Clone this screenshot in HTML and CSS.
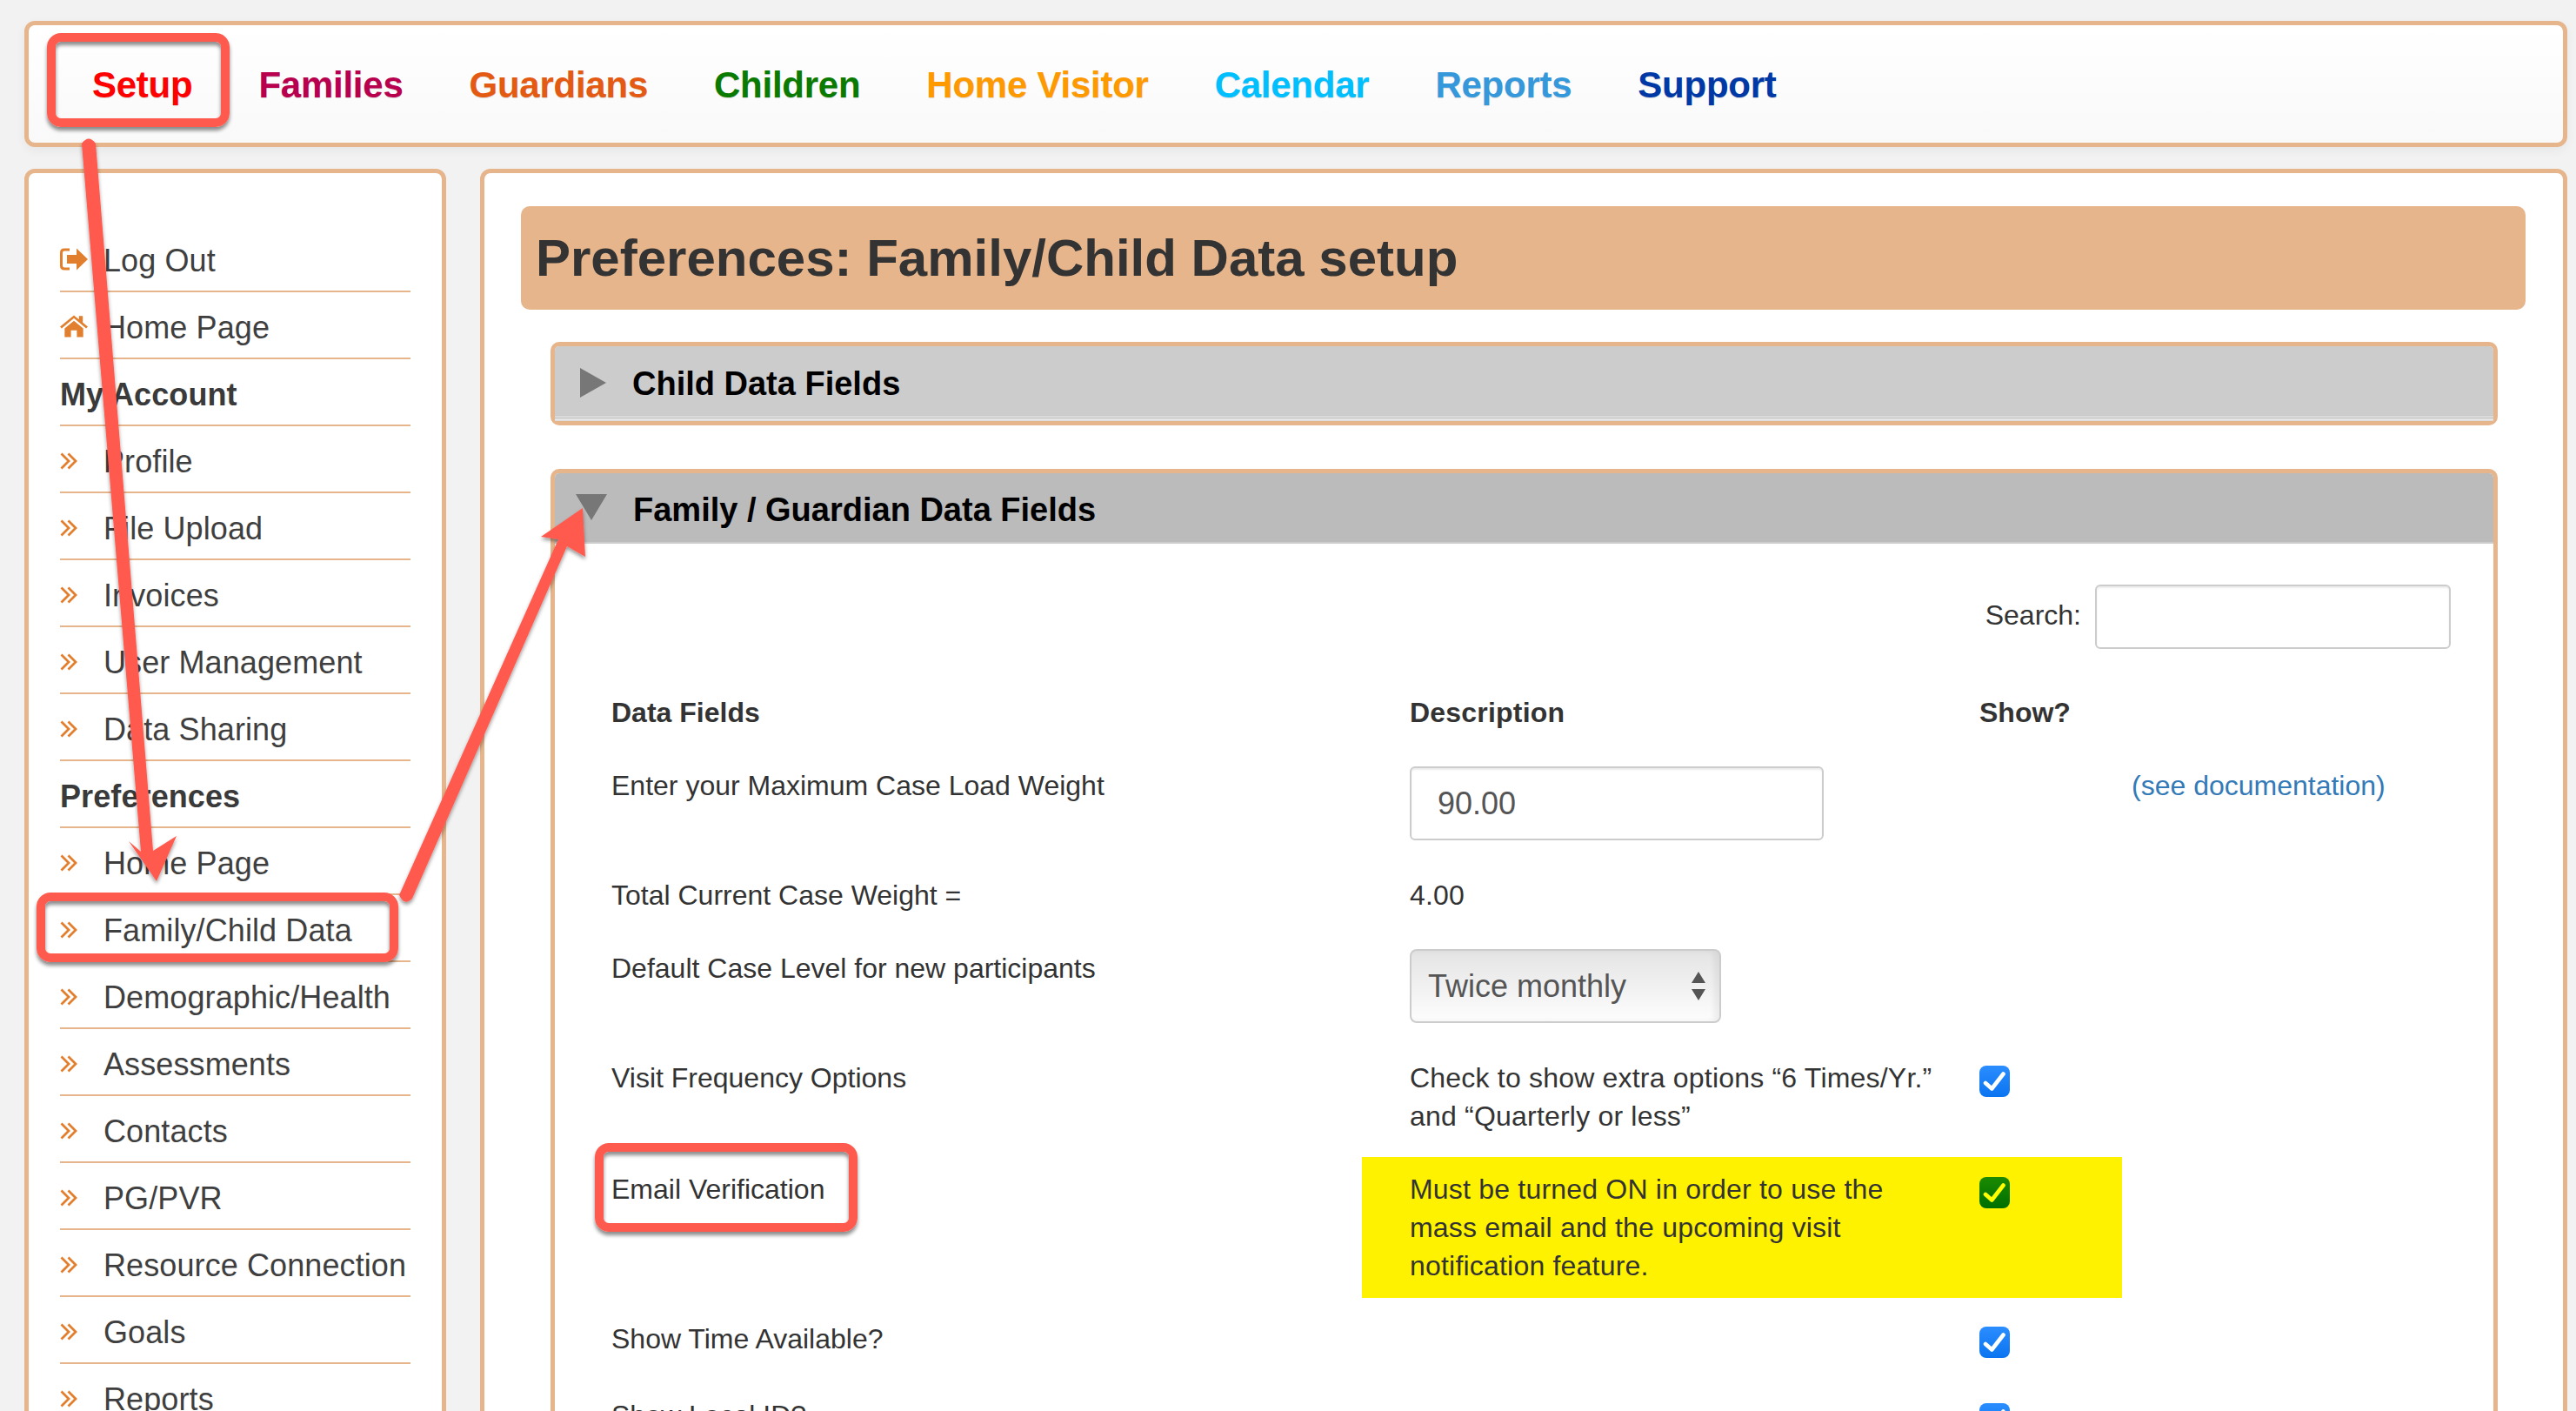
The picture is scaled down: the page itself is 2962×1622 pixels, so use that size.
FILE: index.html
```html
<!DOCTYPE html>
<html lang="en">
<head>
<meta charset="utf-8">
<title>Preferences: Family/Child Data setup</title>
<link rel="stylesheet" href="styles.css">
</head>
<body>
<svg width="0" height="0" class="defs">
  <defs>
    <symbol id="chev" viewBox="0 0 20 20"><path d="M1.5 1.5 L10 10 L1.5 18.5 M9.5 1.5 L18 10 L9.5 18.5" fill="none" stroke="#e17f2e" stroke-width="2.8"/></symbol>
    <symbol id="tick" viewBox="0 0 35 36"><path d="M7 20 L14.3 26.5 L27.5 9.5" fill="none" stroke="currentColor" stroke-width="4.6" stroke-linecap="round" stroke-linejoin="round"/></symbol>
  </defs>
</svg>
<div class="page">
  <nav class="topnav">
    <a class="nav-item c-setup">Setup</a>
    <a class="nav-item c-families">Families</a>
    <a class="nav-item c-guardians">Guardians</a>
    <a class="nav-item c-children">Children</a>
    <a class="nav-item c-visitor">Home Visitor</a>
    <a class="nav-item c-calendar">Calendar</a>
    <a class="nav-item c-reports">Reports</a>
    <a class="nav-item c-support">Support</a>
  </nav>
  <div class="columns">
    <aside class="sidebar">
      <ul class="menu">
        <li class="menu-row"><svg class="menu-icon" viewBox="0 0 32 25"><path d="M11 1.5 H5 Q1.5 1.5 1.5 5 V20 Q1.5 23.5 5 23.5 H11" fill="none" stroke="#e17f2e" stroke-width="3"/><path d="M8 7.5 H19 V0 L32 12.5 L19 25 V17.5 H8 Z" fill="#e17f2e"/></svg><span>Log Out</span></li>
        <li class="menu-row"><svg class="menu-icon" viewBox="0 0 33 26"><path d="M0 13.5 L16.5 0 L22.5 5 V1 H27 V8.5 L33 13.5 L31 15.5 L16.5 3.5 L2 15.5 Z M5.5 15.5 L16.5 6.5 L27.5 15.5 V26 H20 V18 H13 V26 H5.5 Z" fill="#e17f2e"/></svg><span>Home Page</span></li>
        <li class="menu-row menu-head">My Account</li>
        <li class="menu-row"><svg class="menu-chev"><use href="#chev"/></svg><span>Profile</span></li>
        <li class="menu-row"><svg class="menu-chev"><use href="#chev"/></svg><span>File Upload</span></li>
        <li class="menu-row"><svg class="menu-chev"><use href="#chev"/></svg><span>Invoices</span></li>
        <li class="menu-row"><svg class="menu-chev"><use href="#chev"/></svg><span>User Management</span></li>
        <li class="menu-row"><svg class="menu-chev"><use href="#chev"/></svg><span>Data Sharing</span></li>
        <li class="menu-row menu-head">Preferences</li>
        <li class="menu-row"><svg class="menu-chev"><use href="#chev"/></svg><span>Home Page</span></li>
        <li class="menu-row"><svg class="menu-chev"><use href="#chev"/></svg><span>Family/Child Data</span></li>
        <li class="menu-row"><svg class="menu-chev"><use href="#chev"/></svg><span>Demographic/Health</span></li>
        <li class="menu-row"><svg class="menu-chev"><use href="#chev"/></svg><span>Assessments</span></li>
        <li class="menu-row"><svg class="menu-chev"><use href="#chev"/></svg><span>Contacts</span></li>
        <li class="menu-row"><svg class="menu-chev"><use href="#chev"/></svg><span>PG/PVR</span></li>
        <li class="menu-row"><svg class="menu-chev"><use href="#chev"/></svg><span>Resource Connection</span></li>
        <li class="menu-row"><svg class="menu-chev"><use href="#chev"/></svg><span>Goals</span></li>
        <li class="menu-row"><svg class="menu-chev"><use href="#chev"/></svg><span>Reports</span></li>
      </ul>
    </aside>
    <main class="content">
      <h1 class="title">Preferences: Family/Child Data setup</h1>
      <section class="panel panel-closed">
        <h2 class="panel-head"><span class="tri-right"></span>Child Data Fields</h2>
      </section>
      <section class="panel panel-open">
        <h2 class="panel-head"><span class="tri-down"></span>Family / Guardian Data Fields</h2>
        <div class="panel-body">
          <div class="search"><label class="search-label">Search:</label><input class="search-input" type="text"></div>
          <div class="grid">
            <div class="row row-head"><div class="c1">Data Fields</div><div class="c2">Description</div><div class="c3">Show?</div></div>
            <div class="row row-weight"><div class="c1">Enter your Maximum Case Load Weight</div><div class="c2"><input class="text-input" type="text" value="90.00"></div><div class="c3 doc"><a class="doc-link">(see documentation)</a></div></div>
            <div class="row row-total"><div class="c1">Total Current Case Weight =</div><div class="c2">4.00</div></div>
            <div class="row row-level"><div class="c1">Default Case Level for new participants</div><div class="c2"><div class="select"><span>Twice monthly</span><svg class="select-arrows" viewBox="0 0 16 33"><path d="M8 0 L16 13 H0 Z M8 33 L16 20 H0 Z" fill="#555"/></svg></div></div></div>
            <div class="row row-freq"><div class="c1">Visit Frequency Options</div><div class="c2">Check to show extra options “6 Times/Yr.”<br>and “Quarterly or less”</div><div class="c3"><span class="check"><svg class="tick"><use href="#tick"/></svg></span></div></div>
            <div class="row row-email"><div class="c1">Email Verification</div><div class="highlight"><div class="c2">Must be turned ON in order to use the<br>mass email and the upcoming visit<br>notification feature.</div><div class="c3"><span class="check check-green"><svg class="tick"><use href="#tick"/></svg></span></div></div></div>
            <div class="row row-time"><div class="c1">Show Time Available?</div><div class="c2"></div><div class="c3"><span class="check"><svg class="tick"><use href="#tick"/></svg></span></div></div>
            <div class="row row-local"><div class="c1">Show Local ID?</div><div class="c2"></div><div class="c3"><span class="check"><svg class="tick"><use href="#tick"/></svg></span></div></div>
          </div>
        </div>
      </section>
    </main>
  </div>
</div>
<div class="callout callout-setup"></div>
<div class="callout callout-family"></div>
<div class="callout callout-email"></div>
<svg class="arrows" viewBox="0 0 2962 1622">
  <defs><filter id="ds" x="-20%" y="-20%" width="140%" height="140%"><feDropShadow dx="0" dy="3" stdDeviation="2" flood-color="#000" flood-opacity=".4"/></filter></defs>
  <path filter="url(#ds)" d="M94 165 Q102 154 110 165 L176 978 L203 961 L180 1013 L148 967 L162 979 Z" fill="#ff5a4e"/>
  <path filter="url(#ds)" d="M459 1029 Q465 1042 474 1033 L652 628 L673 640 L670 584 L622 617 L642 620 Z" fill="#ff5a4e"/>
</svg>
</body>
</html>
```
FILE: styles.css
```css
* { box-sizing: border-box; }
html, body { margin: 0; height: 1622px; overflow: hidden; }
body { background: #f2f2f2; font-family: "Liberation Sans", Arial, sans-serif; color: #333; position: relative; }
.defs { position: absolute; }
.page { padding: 24px 10px 0 28px; }
.topnav { height: 145px; border: 5px solid #e6b58b; border-radius: 12px; background: linear-gradient(#fff, #f9f9f9); box-shadow: 0 4px 12px rgba(0,0,0,.05); display: flex; align-items: flex-start; padding: 41px 0 0 35px; }
.nav-item { font-size: 42px; font-weight: 700; line-height: 56px; padding: 0 38px; letter-spacing: -.25px; text-shadow: 0 1px 1px rgba(0,0,0,.12); }
.c-setup { color: #f00; }
.c-families { color: #b8004f; }
.c-guardians { color: #e45a12; }
.c-children { color: #0a7a00; }
.c-visitor { color: #ff9900; }
.c-calendar { color: #00bfff; }
.c-reports { color: #3498db; }
.c-support { color: #0039a6; }
.columns { display: flex; gap: 39px; margin-top: 25px; }
.sidebar { width: 485px; flex: none; height: 1500px; background: #fff; border: 5px solid #e6b58b; border-radius: 12px; padding: 60px 36px 0; }
.menu { list-style: none; margin: 0; padding: 0; }
.menu-row { height: 77px; border-bottom: 2px solid #e6b58b; display: flex; align-items: center; font-size: 36px; letter-spacing: .1px; color: #3f3f3f; white-space: nowrap; padding-top: 6px; }
.menu-head { font-weight: 700; color: #3a3a3a; }
.menu-icon { width: 32px; height: 26px; margin: 0 18px 4px 0; flex: none; }
.menu-chev { width: 20px; height: 20px; margin: 0 30px 2px 0; flex: none; }
.content { flex: 1; height: 1500px; background: #fff; border: 5px solid #e6b58b; border-radius: 12px; padding: 38px 43px 0 42px; }
.title { margin: 0; height: 119px; background: #e6b58b; border-radius: 10px; font-size: 60px; line-height: 119px; font-weight: 700; color: #333; padding-left: 17px; }
.panel { margin: 37px 32px 0 34px; border: 5px solid #e6b58b; border-radius: 10px; background: #fff; }
.panel-head { margin: 0; display: flex; align-items: center; color: #000; font-size: 38px; font-weight: 700; padding-left: 29px; }
.panel-closed { height: 96px; margin-top: 37px; }
.panel-closed .panel-head { height: 86px; border-radius: 5px 5px 0 0; background: linear-gradient(#ccc 0 81px, #fff 81px 82px, #999 82px 83px, #fff 83px 84px, #ddd 84px); }
.panel-open { margin-top: 50px; height: 1200px; border-bottom: none; }
.panel-open .panel-head { height: 81px; padding-top: 5px; background: #bbb; border-bottom: 2px solid #ccc; border-radius: 5px 5px 0 0; }
.tri-right { width: 0; height: 0; border-left: 30px solid #777; border-top: 17px solid transparent; border-bottom: 17px solid transparent; margin: -3px 30px 0 0; }
.tri-down { width: 0; height: 0; border-top: 30px solid #777; border-left: 18px solid transparent; border-right: 18px solid transparent; margin: -6px 30px 0 -5px; }
.panel-body { padding: 0 0 0 65px; font-size: 32px; }
.search { display: flex; justify-content: flex-end; align-items: center; padding: 47px 49px 0 0; height: 121px; }
.search-label { margin: 0 16px 3px 0; }
.search-input { width: 409px; height: 74px; border: 2px solid #ccc; border-radius: 6px; background: #fff; box-shadow: inset 0 2px 2px rgba(0,0,0,.08); }
.row { display: flex; line-height: 44px; }
.c1 { width: 918px; flex: none; }
.c2 { width: 655px; flex: none; letter-spacing: .2px; }
.c3 { flex: 1; }
.row-head { font-weight: 700; height: 135px; padding-top: 51px; }
.row-weight { height: 126px; }
.row-total { height: 84px; }
.row-level { height: 126px; }
.row-freq { height: 128px; }
.row-email { height: 172px; }
.row-time { height: 88px; }
.highlight { display: flex; flex: none; width: 874px; height: 162px; margin: -15px 0 0 -55px; padding: 15px 0 0 55px; background: #fff200; }
.text-input { width: 476px; height: 85px; border: 2px solid #ccc; border-radius: 6px; padding: 0 30px; font: 36px "Liberation Sans", Arial, sans-serif; color: #555; background: #fff; box-shadow: inset 0 2px 2px rgba(0,0,0,.08); }
.doc { padding-left: 175px; }
.doc-link { color: #337ab7; white-space: nowrap; }
.select { width: 358px; height: 85px; border: 2px solid #ccc; border-radius: 8px; background: linear-gradient(#e4e4e4, #fdfdfd); box-shadow: inset -6px 0 6px rgba(0,0,0,.06); display: flex; align-items: center; justify-content: space-between; padding: 0 16px 0 19px; font-size: 36px; color: #555; letter-spacing: 0; }
.select-arrows { width: 16px; height: 33px; }
.check { display: block; width: 35px; height: 36px; margin-top: 8px; border-radius: 8px; background: linear-gradient(#2b8dff, #0a74f0); color: #fff; }
.check-green { background: linear-gradient(#1b8a00, #006f00); color: #ff0; }
.tick { display: block; width: 35px; height: 36px; }
.callout { position: absolute; border: 10px solid #ff5a4e; border-radius: 16px; box-shadow: 0 4px 4px rgba(0,0,0,.45), inset 0 4px 4px rgba(0,0,0,.45); }
.callout-setup { left: 54px; top: 38px; width: 210px; height: 108px; }
.callout-family { left: 42px; top: 1026px; width: 416px; height: 80px; }
.callout-email { left: 684px; top: 1314px; width: 302px; height: 102px; }
.arrows { position: absolute; left: 0; top: 0; width: 2962px; height: 1622px; pointer-events: none; }
```
